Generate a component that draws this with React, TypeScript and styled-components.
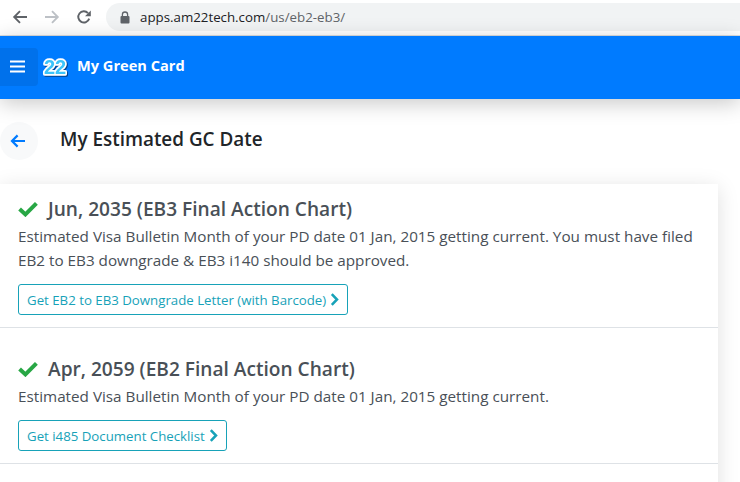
import React from "react";
import styled, { createGlobalStyle } from "styled-components";

const Global = createGlobalStyle`
  html, body { margin: 0; padding: 0; background: #fff; overflow: hidden; }
  body { font-family: "Open Sans", "Noto Sans", "Liberation Sans", sans-serif; color: #212529; }
  * { box-sizing: border-box; }
`;

const Page = styled.div`
  width: 740px;
  height: 482px;
  overflow: hidden;
  display: flex;
  flex-direction: column;
`;

const BrowserBar = styled.div`
  height: 36px;
  flex: none;
  display: flex;
  align-items: center;
  padding: 0 0 1px 12px;
  background: #fff;
  border-bottom: 1px solid #dcdee0;
`;

const NavIcon = styled.svg`
  flex: none;
  display: block;
  margin-right: 16px;
`;

const Omnibox = styled.div`
  flex: 1;
  height: 28px;
  padding-left: 14px;
  display: flex;
  align-items: center;
  gap: 10px;
  background: #f1f3f4;
  border-radius: 14px 0 0 14px;
  font-size: 13.3px;
  color: #5f6368;
`;

const Host = styled.span`
  color: #202124;
`;

const Navbar = styled.header`
  height: 63px;
  flex: none;
  display: flex;
  align-items: center;
  padding-bottom: 2px;
  background: #007bff;
  box-shadow: 0 4px 20px rgba(0, 0, 0, 0.22);
  position: relative;
  z-index: 2;
`;

const MenuButton = styled.div`
  width: 38px;
  height: 38px;
  display: flex;
  align-items: center;
  justify-content: center;
  padding-right: 3px;
  background: #0071eb;
  border-radius: 0 4px 4px 0;
  margin-right: 3px;
`;

const Logo = styled.svg`
  display: block;
  margin-right: 8px;
`;

const Brand = styled.span`
  margin-bottom: 3px;
  color: #fff;
  font-size: 14.6px;
  font-weight: 700;
`;

const Heading = styled.div`
  display: flex;
  align-items: center;
  height: 38px;
  margin-top: 23px;
`;

const BackCircle = styled.div`
  width: 38px;
  height: 38px;
  border-radius: 50%;
  background: #f8f9fa;
  display: flex;
  align-items: center;
  justify-content: center;
  padding-right: 2px;
  margin-right: 22px;
`;

const HeadingText = styled.h1`
  margin: 0 0 4px;
  font-size: 18.9px;
  font-weight: 600;
  color: #212529;
`;

const Card = styled.section`
  width: 718px;
  margin-top: 24px;
  background: #fff;
  box-shadow: 0 4px 20px rgba(0, 0, 0, 0.13);
  flex: none;
`;

const Item = styled.article<{ $first?: boolean }>`
  padding: ${(p) => (p.$first ? "13px" : "29px")} 18px 12px;
  border-bottom: 1px solid #dee2e6;
`;

const Title = styled.h2`
  margin: 0;
  height: 24px;
  display: flex;
  align-items: center;
  gap: 10px;
  font-size: 19.12px;
  font-weight: 600;
  line-height: 24px;
  color: #495057;
`;

const Text = styled.p`
  margin: 3px 0 0;
  font-size: 15.25px;
  line-height: 24px;
  color: #495057;
`;

const OutlineButton = styled.a`
  display: inline-flex;
  align-items: center;
  gap: 4px;
  height: 31px;
  margin-top: 12px;
  padding: 0 8px;
  border: 1px solid #17a2b8;
  border-radius: 3px;
  font-size: 13.25px;
  color: #17a2b8;
  white-space: nowrap;
`;

const Check = () => (
  <svg width="20" height="16" viewBox="0 0 20 16" style={{ flex: "none" }}>
    <path d="M1.6 8 L7.4 13.4 L18.4 2.4" fill="none" stroke="#28a745" strokeWidth="4" />
  </svg>
);

const Chevron = () => (
  <svg width="9" height="13" viewBox="0 0 9 13">
    <path d="M1.8 1.2 L7 6.5 L1.8 11.8" fill="none" stroke="#17a2b8" strokeWidth="2.5" />
  </svg>
);

export default function App() {
  return (
    <Page>
      <Global />
      <BrowserBar>
        <NavIcon width="16" height="16" viewBox="0 0 16 16">
          <path d="M15 8H2.5M8 2.2 2.2 8 8 13.8" fill="none" stroke="#5f6368" strokeWidth="1.9" />
        </NavIcon>
        <NavIcon width="16" height="16" viewBox="0 0 16 16">
          <path d="M1 8h12.5M8 2.2 13.8 8 8 13.8" fill="none" stroke="#bdc1c6" strokeWidth="1.9" />
        </NavIcon>
        <NavIcon width="16" height="16" viewBox="0 0 16 16" style={{ marginRight: 14 }}>
          <path d="M13.2 9.6A5.6 5.6 0 1 1 12 4.1" fill="none" stroke="#5f6368" strokeWidth="1.9" />
          <path d="M14.8 1.4v5.8H9z" fill="#5f6368" />
        </NavIcon>
        <Omnibox>
          <svg width="10" height="13" viewBox="0 0 10 13">
            <path d="M2.4 5.5V3.6a2.6 2.6 0 0 1 5.2 0v1.9" fill="none" stroke="#5f6368" strokeWidth="1.3" />
            <rect x="0.5" y="5" width="9" height="7.5" rx="1" fill="#5f6368" />
          </svg>
          <span>
            <Host>apps.am22tech.com</Host>/us/eb2-eb3/
          </span>
        </Omnibox>
      </BrowserBar>
      <Navbar>
        <MenuButton>
          <svg width="15" height="13" viewBox="0 0 15 13">
            <path d="M0 1.5h15M0 6.5h15M0 11.5h15" stroke="#fff" strokeWidth="2" />
          </svg>
        </MenuButton>
        <Logo width="28" height="24" viewBox="0 0 28 24">
          <text
            x="14"
            y="19"
            textAnchor="middle"
            fontFamily="'Liberation Sans', sans-serif"
            fontWeight="700"
            fontSize="20"
            fill="#3cc4fa"
            stroke="#fff"
            strokeWidth="3.4"
            strokeLinejoin="round"
            paintOrder="stroke"
            style={{ filter: "drop-shadow(1px 1.5px 0.6px #00408a)" }}
          >
            22
          </text>
        </Logo>
        <Brand>My Green Card</Brand>
      </Navbar>
      <Heading>
        <BackCircle>
          <svg width="16" height="14" viewBox="0 0 16 14">
            <path d="M15 7H2.2M7.6 1.4 2 7l5.6 5.6" fill="none" stroke="#007bff" strokeWidth="2.2" />
          </svg>
        </BackCircle>
        <HeadingText>My Estimated GC Date</HeadingText>
      </Heading>
      <Card>
        <Item $first>
          <Title>
            <Check />
            Jun, 2035 (EB3 Final Action Chart)
          </Title>
          <Text>
            Estimated Visa Bulletin Month of your PD date 01 Jan, 2015 getting current. You must have filed
            EB2 to EB3 downgrade &amp; EB3 i140 should be approved.
          </Text>
          <OutlineButton>
            Get EB2 to EB3 Downgrade Letter (with Barcode) <Chevron />
          </OutlineButton>
        </Item>
        <Item>
          <Title>
            <Check />
            Apr, 2059 (EB2 Final Action Chart)
          </Title>
          <Text>Estimated Visa Bulletin Month of your PD date 01 Jan, 2015 getting current.</Text>
          <OutlineButton>
            Get i485 Document Checklist <Chevron />
          </OutlineButton>
        </Item>
        <Item />
      </Card>
    </Page>
  );
}
